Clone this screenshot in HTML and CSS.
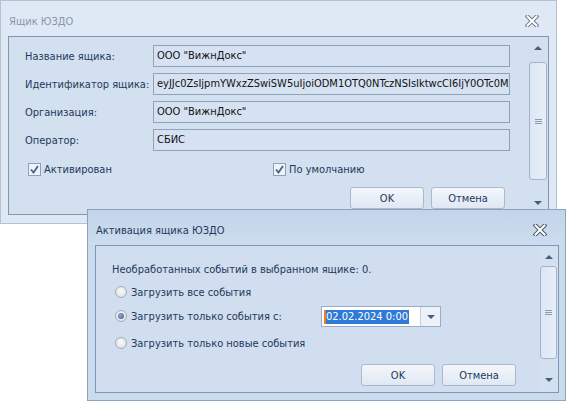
FILE: index.html
```html
<!DOCTYPE html>
<html lang="ru">
<head>
<meta charset="utf-8">
<title>Ящик ЮЗДО</title>
<link rel="stylesheet" href="styles.css">
</head>
<body>
<div class="win win1">
  <div class="titlebar">
    <span class="title">Ящик ЮЗДО</span>
    <svg class="close" width="14" height="12" viewBox="0 0 14 12"><path d="M2.5 1.5 L11.5 10.5 M11.5 1.5 L2.5 10.5" stroke="#6f7c8c" stroke-width="4" stroke-linecap="square" fill="none"/><path d="M2.5 1.5 L11.5 10.5 M11.5 1.5 L2.5 10.5" stroke="#ffffff" stroke-width="2" stroke-linecap="square" fill="none"/></svg>
  </div>
  <div class="panel p1">
    <div class="content c1">
      <div class="row"><span class="lbl">Название ящика:</span><div class="field">ООО "ВижнДокс"</div></div>
      <div class="row"><span class="lbl">Идентификатор ящика:</span><div class="field">eyJJc0ZsIjpmYWxzZSwiSW5uIjoiODM1OTQ0NTczNSIsIktwcCI6IjY0OTc0MzAwMSJ9</div></div>
      <div class="row"><span class="lbl">Организация:</span><div class="field">ООО "ВижнДокс"</div></div>
      <div class="row"><span class="lbl">Оператор:</span><div class="field">СБИС</div></div>
      <div class="checks">
        <span class="chk chk1"><svg class="box" width="13" height="13" viewBox="0 0 13 13"><rect x="0.5" y="0.5" width="12" height="12" fill="#eef3f9" stroke="#8ea1bb"/><path d="M3 6.5 L5.5 9.5 L10 3" stroke="#4d6283" stroke-width="1.8" fill="none"/></svg>Активирован</span>
        <span class="chk chk2"><svg class="box" width="13" height="13" viewBox="0 0 13 13"><rect x="0.5" y="0.5" width="12" height="12" fill="#eef3f9" stroke="#8ea1bb"/><path d="M3 6.5 L5.5 9.5 L10 3" stroke="#4d6283" stroke-width="1.8" fill="none"/></svg>По умолчанию</span>
      </div>
      <div class="buttons b1"><button class="btn">OK</button><button class="btn">Отмена</button></div>
    </div>
    <div class="scroll s1">
      <span class="arr up"></span>
      <div class="thumb t1"><span class="grip"></span></div>
      <span class="arr down"></span>
    </div>
  </div>
</div>

<div class="win win2">
  <div class="titlebar tb2">
    <span class="title active">Активация ящика ЮЗДО</span>
    <svg class="close" width="14" height="12" viewBox="0 0 14 12"><path d="M2.5 1.5 L11.5 10.5 M11.5 1.5 L2.5 10.5" stroke="#4a5566" stroke-width="4" stroke-linecap="square" fill="none"/><path d="M2.5 1.5 L11.5 10.5 M11.5 1.5 L2.5 10.5" stroke="#ffffff" stroke-width="2" stroke-linecap="square" fill="none"/></svg>
  </div>
  <div class="panel p2">
    <div class="content c2">
      <div class="info">Необработанных событий в выбранном ящике: 0.</div>
      <div class="radio r1"><span class="rb"></span>Загрузить все события</div>
      <div class="radio r2"><span class="rb on"></span><span class="rtxt">Загрузить только события с:</span>
        <div class="combo"><span class="val"><span class="caret"></span><span class="sel">02.02.2024 0:00</span></span><span class="drop"><span class="tri"></span></span></div>
      </div>
      <div class="radio r3"><span class="rb"></span>Загрузить только новые события</div>
      <div class="buttons b2"><button class="btn">OK</button><button class="btn">Отмена</button></div>
    </div>
    <div class="scroll s2">
      <span class="arr up"></span>
      <div class="thumb t2"><span class="grip"></span></div>
      <span class="arr down"></span>
    </div>
  </div>
</div>
</body>
</html>
```

FILE: styles.css
```css
* { box-sizing: border-box; }
html, body { margin: 0; padding: 0; }
body {
  width: 568px;
  height: 402px;
  background: #ffffff;
  position: relative;
  overflow: hidden;
  font-family: "DejaVu Sans Condensed", "DejaVu Sans", Tahoma, sans-serif;
  font-size: 11px;
  color: #1e395b;
}
.win {
  position: absolute;
  background: #dfe9f5;
  border: 1px solid #b4c2d3;
  display: flex;
  flex-direction: column;
}
.win1 { left: 0; top: 0; width: 557px; height: 224px; }
.win2 {
  left: 87px; top: 209px; width: 479px; height: 192px;
  border-color: #8ea2bc;
  background: #cbdbee;
}
.titlebar {
  height: 35px;
  flex: none;
  display: flex;
  align-items: center;
  padding: 5px 17px 0 8px;
  justify-content: space-between;
}
.tb2 {
  padding-right: 18px;
  background: linear-gradient(#c3d5eb, #cddcee);
}
.title { color: #8696ad; }
.title.active { color: #1e395b; }
.close { display: block; }

.panel {
  display: flex;
  border: 1px solid #8196b2;
  background: #d3e0f0;
  margin: 0 7px 0 7px;
}
.p1 { height: 179px; }
.p2 { height: 148px; margin-right: 6px; background: #d1deef; }
.content { flex: 1; display: flex; flex-direction: column; }

.c1 { padding: 8px 0 0 16px; }
.row { display: flex; align-items: center; height: 22px; margin-bottom: 6px; }
.lbl { width: 128px; flex: none; color: #1e395b; white-space: nowrap; }
.field {
  width: 357px;
  height: 22px;
  border: 1px solid #8fa2bc;
  background: #d6e2f1;
  color: #111;
  padding: 0 3px;
  line-height: 20px;
  white-space: nowrap;
  overflow: hidden;
}
.checks { display: flex; margin-top: 5px; height: 14px; align-items: center; }
.chk { display: flex; align-items: center; color: #1e395b; }
.chk .box { margin-right: 3px; flex: none; }
.chk1 { margin-left: 3px; width: 245px; }

.buttons { display: flex; justify-content: flex-end; gap: 7px; }
.b1 { margin-top: 11px; margin-right: 23px; }
.btn {
  width: 74px;
  height: 22px;
  border: 1px solid #a9b8cb;
  border-radius: 3px;
  background: linear-gradient(#f4f7fb, #dfe8f3);
  font: inherit;
  color: #1e395b;
  padding: 0;
}

.scroll {
  width: 20px;
  flex: none;
  display: flex;
  flex-direction: column;
  align-items: center;
  background: #d3e0f0;
}
.arr { width: 0; height: 0; border-left: 4px solid transparent; border-right: 4px solid transparent; }
.arr.up { border-bottom: 4px solid #4a5d7a; margin-top: 9px; }
.arr.down { border-top: 4px solid #4a5d7a; }
.thumb {
  width: 18px;
  border: 1px solid #a3b4ca;
  border-radius: 3px;
  background: linear-gradient(90deg, #dde7f4, #e6eef8);
  display: flex;
  align-items: center;
  justify-content: center;
}
.t1 { height: 118px; margin-top: 12px; margin-bottom: 21px; }
.t2 { height: 93px; margin-top: 7px; margin-bottom: 19px; }
.grip {
  width: 7px;
  height: 5px;
  border-top: 1px solid #8a9ab1;
  border-bottom: 1px solid #8a9ab1;
  position: relative;
}
.grip::after {
  content: "";
  position: absolute;
  left: 0; right: 0; top: 1px;
  border-top: 1px solid #8a9ab1;
}

.c2 { padding: 17px 0 0 16px; }
.info { height: 13px; line-height: 13px; }
.radio { display: flex; align-items: center; height: 14px; }
.r1 { margin-top: 9px; }
.r2 { margin-top: 10px; }
.r3 { margin-top: 13px; }
.rb {
  width: 12px; height: 12px;
  border-radius: 50%;
  border: 1px solid #a4abb6;
  background: radial-gradient(circle at 50% 40%, #fafafa, #d9dde2);
  margin: 0 4px 0 3px;
  flex: none;
  display: flex; align-items: center; justify-content: center;
}
.rb.on::after {
  content: "";
  width: 6px; height: 6px; border-radius: 50%;
  background: radial-gradient(circle at 40% 40%, #8ea9d3, #38598d);
}
.rtxt { width: 190px; }
.combo {
  display: flex;
  width: 120px;
  height: 21px;
  border: 1px solid #9badc6;
  background: #ffffff;
  margin-top: 1px;
}
.val { flex: 1; display: flex; align-items: center; padding-left: 2px; }
.caret { width: 2px; height: 14px; background: #f07c1e; }
.sel { background: #2e7ad8; color: #fff; height: 14px; line-height: 14px; padding-right: 1px; }
.drop {
  width: 20px;
  border-left: 1px solid #c3cfdd;
  background: #edf2f8;
  display: flex; align-items: center; justify-content: center;
}
.tri { width: 0; height: 0; border-left: 4px solid transparent; border-right: 4px solid transparent; border-top: 4px solid #4a5d7a; }
.b2 { margin-top: 14px; margin-right: 23px; }
.s2 { width: 19px; }
.s2 .thumb { width: 17px; }
.s2 .arr.up { margin-top: 9px; }
```
